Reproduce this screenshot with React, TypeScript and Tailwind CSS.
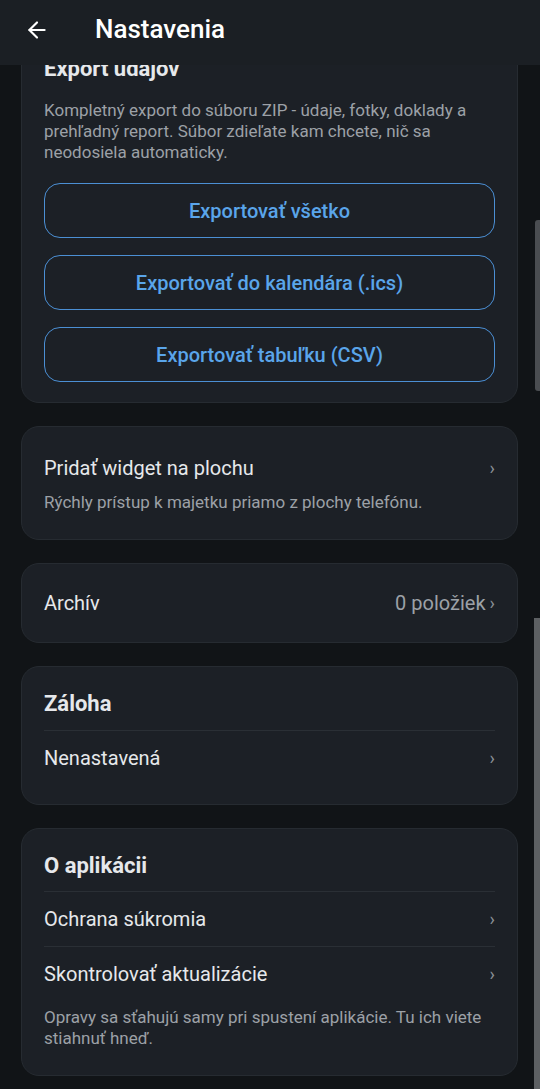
import { ArrowLeft } from 'lucide-react';

const Chevron = () => <span className="text-[18px] leading-none text-[#8b9096]">›</span>;

function ExportButton({ label }: { label: string }) {
  return (
    <button className="h-[55px] w-full rounded-[16px] border border-[#4b8fd4] text-[20px] font-medium text-[#5aa5ea]">
      {label}
    </button>
  );
}

export default function App() {
  return (
    <div
      className="relative h-[1089px] overflow-hidden bg-[#111417] text-[#e6e8eb]"
      style={{ fontFamily: 'Roboto, "Noto Sans", sans-serif' }}
    >
      {/* Header */}
      <div className="relative z-10 flex h-[65px] items-center bg-[#1b1f24] pb-[6px]">
        <ArrowLeft className="ml-[24px] h-[26px] w-[26px] text-white" strokeWidth={2} />
        <h1 className="ml-[45px] text-[26px] font-medium text-white">Nastavenia</h1>
      </div>

      <div className="flex flex-col gap-[23px] px-[21px] pr-[22px]">
        {/* Export */}
        <div className="-mt-[33px] rounded-[18px] border border-[#262b31] bg-[#1c2026] px-[22px] pt-[22px] pb-[20px]">
          <h2 className="text-[22px] font-bold leading-[28px]">Export údajov</h2>
          <p className="mt-[17px] text-[17px] leading-[21px] text-[#9ca1a7]">
            Kompletný export do súboru ZIP - údaje, fotky, doklady a prehľadný report. Súbor zdieľate kam chcete, nič sa
            neodosiela automaticky.
          </p>
          <div className="mt-[20px] flex flex-col gap-[17px]">
            <ExportButton label="Exportovať všetko" />
            <ExportButton label="Exportovať do kalendára (.ics)" />
            <ExportButton label="Exportovať tabuľku (CSV)" />
          </div>
        </div>

        {/* Widget */}
        <div className="rounded-[18px] border border-[#262b31] bg-[#1c2026] px-[22px] pt-[29px] pb-[26px]">
          <div className="flex items-center justify-between">
            <span className="text-[20px] leading-[24px]">Pridať widget na plochu</span>
            <Chevron />
          </div>
          <p className="mt-[12px] text-[17px] leading-[21px] text-[#9ca1a7]">
            Rýchly prístup k majetku priamo z plochy telefónu.
          </p>
        </div>

        {/* Archive */}
        <div className="flex items-center justify-between rounded-[18px] border border-[#262b31] bg-[#1c2026] px-[22px] py-[27px]">
          <span className="text-[20px] leading-[24px]">Archív</span>
          <span className="flex items-center gap-[4px] text-[20px] leading-[24px] text-[#9ca1a7]">
            0 položiek <Chevron />
          </span>
        </div>

        {/* Backup */}
        <div className="rounded-[18px] border border-[#262b31] bg-[#1c2026] px-[22px] pt-[23px] pb-[19px]">
          <h2 className="pb-[12px] text-[22px] font-bold leading-[28px]">Záloha</h2>
          <div className="flex items-center justify-between border-t border-[#2a2f35] py-[15px]">
            <span className="text-[20px] leading-[24px]">Nenastavená</span>
            <Chevron />
          </div>
        </div>

        {/* About */}
        <div className="rounded-[18px] border border-[#262b31] bg-[#1c2026] px-[22px] pt-[23px] pb-[26px]">
          <h2 className="pb-[11px] text-[22px] font-bold leading-[28px]">O aplikácii</h2>
          <div className="flex h-[55px] items-center justify-between border-t border-[#2a2f35]">
            <span className="text-[20px] leading-[24px]">Ochrana súkromia</span>
            <Chevron />
          </div>
          <div className="flex h-[55px] items-center justify-between border-t border-[#2a2f35]">
            <span className="text-[20px] leading-[24px]">Skontrolovať aktualizácie</span>
            <Chevron />
          </div>
          <p className="mt-[6px] text-[17px] leading-[21px] text-[#9ca1a7]">
            Opravy sa sťahujú samy pri spustení aplikácie. Tu ich viete stiahnuť hneď.
          </p>
        </div>
      </div>

      {/* Scrollbar overlays */}
      <div className="absolute right-0 top-[220px] h-[171px] w-[5px] rounded-l-[3px] bg-[#4a4d51]" />
      <div className="absolute right-0 top-[618px] h-[471px] w-[6px] bg-[#5d6063]" />
    </div>
  );
}
